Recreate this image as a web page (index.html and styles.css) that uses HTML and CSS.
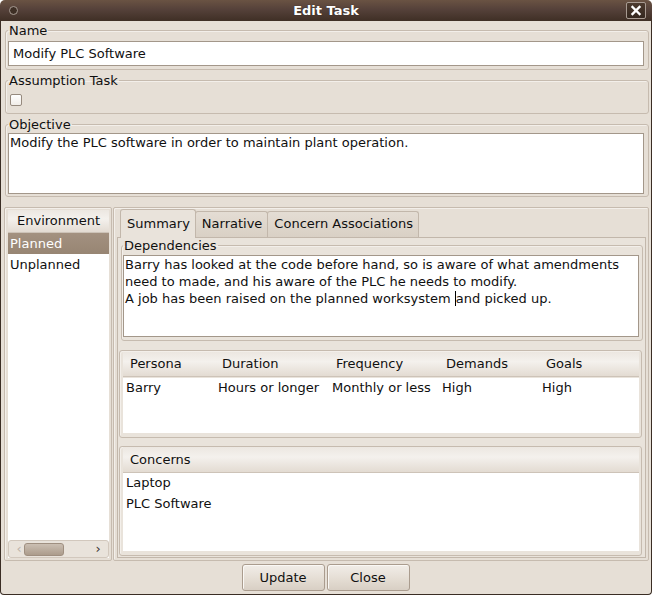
FILE: index.html
```html
<!DOCTYPE html>
<html>
<head>
<meta charset="utf-8">
<title>Edit Task</title>
<link rel="stylesheet" href="styles.css">
</head>
<body>
<div class="window">
  <div class="titlebar">
    <span class="knob"></span>
    <span class="title">Edit Task</span>
    <span class="closebtn">
      <svg width="12" height="11" viewBox="0 0 12 11"><path d="M2.5 2 L9.5 9 M9.5 2 L2.5 9" stroke="#fff" stroke-width="2.4" stroke-linecap="square"/></svg>
    </span>
  </div>
  <div class="client">
    <fieldset class="frame f-name">
      <legend>Name</legend>
      <div class="entry">Modify PLC Software</div>
    </fieldset>
    <fieldset class="frame f-assume">
      <legend>Assumption Task</legend>
      <span class="check"></span>
    </fieldset>
    <fieldset class="frame f-obj">
      <legend>Objective</legend>
      <div class="textarea obj-text">Modify the PLC software in order to maintain plant operation.</div>
    </fieldset>

    <div class="lower">
      <div class="envpanel">
        <div class="tree">
          <div class="colhead center">Environment</div>
          <div class="row selected">Planned</div>
          <div class="row">Unplanned</div>
          <div class="fill"></div>
          <div class="hscroll">
            <span class="arr dim">&#8249;</span>
            <span class="thumb"></span>
            <span class="arr">&#8250;</span>
          </div>
        </div>
      </div>

      <div class="nbpanel">
        <div class="tabs">
          <div class="tab active">Summary</div>
          <div class="tab">Narrative</div>
          <div class="tab">Concern Associations</div>
        </div>
        <div class="page">
          <fieldset class="frame f-deps">
            <legend>Dependencies</legend>
            <div class="textarea deps-text">Barry has looked at the code before hand, so is aware of what amendments<br>need to made, and his aware of the PLC he needs to modify.<br>A job has been raised on the planned worksystem <span class="caret"></span>and picked up.</div>
          </fieldset>
          <div class="listbox persona">
            <div class="grid head">
              <span>Persona</span><span>Duration</span><span>Frequency</span><span>Demands</span><span>Goals</span>
            </div>
            <div class="listbody">
              <div class="grid rowg">
                <span>Barry</span><span>Hours or longer</span><span>Monthly or less</span><span>High</span><span>High</span>
              </div>
            </div>
          </div>
          <div class="listbox concerns">
            <div class="colhead">Concerns</div>
            <div class="listbody">
              <div class="row c-row">Laptop</div>
              <div class="row c-row">PLC Software</div>
            </div>
          </div>
        </div>
      </div>
    </div>

    <div class="buttons">
      <div class="btn">Update</div>
      <div class="btn">Close</div>
    </div>
  </div>
</div>
</body>
</html>
```
FILE: styles.css
```css
* { box-sizing: border-box; }
html, body { margin: 0; padding: 0; }
body {
  width: 652px;
  height: 595px;
  overflow: hidden;
  background: #ffffff;
  font-family: "DejaVu Sans", "Noto Sans", sans-serif;
  font-size: 13px;
  color: #101010;
}
.window {
  width: 652px;
  height: 595px;
  display: flex;
  flex-direction: column;
}
.titlebar {
  height: 21px;
  flex: none;
  display: grid;
  grid-template-columns: 1fr auto 1fr;
  align-items: center;
  background: linear-gradient(#6a5343, #55413a 45%, #3f2f25);
  border-radius: 5px 5px 0 0;
  color: #ffffff;
  font-weight: bold;
  font-size: 13px;
}
.title { line-height: 21px; text-shadow: 0 0 1px #2a1f18; }
.knob {
  width: 9px;
  height: 9px;
  margin-left: 9px;
  border-radius: 50%;
  background: #3e2f25;
  border: 1px solid #a79b92;
}
.closebtn {
  justify-self: end;
  margin-right: 6px;
  width: 20px;
  height: 17px;
  border: 1px solid #a89b92;
  border-radius: 2px;
  background: linear-gradient(#4c3a2e, #352820);
  display: flex;
  align-items: center;
  justify-content: center;
}
.client {
  flex: 1;
  display: flex;
  flex-direction: column;
  background: #e6dfd6;
  border: 1px solid #3a2d24;
  border-top: 0;
  border-radius: 0 0 4px 4px;
  padding: 2px 2px 0 4px;
}
.frame {
  margin: 0;
  min-width: 0;
  border: 1px solid #c6bbaf;
  border-radius: 3px;
  box-shadow: inset 1px 1px 0 #f3efea;
  padding: 0 4px 3px 2px;
}
.frame legend {
  padding: 0 1px;
  line-height: 15px;
  font-size: 13px;
}
.entry {
  margin-top: 3px;
  height: 25px;
  background: #ffffff;
  border: 1px solid #a3978a;
  padding: 0 4px;
  line-height: 23px;
  white-space: nowrap;
}
.f-assume { margin-top: 3px; padding-bottom: 3px; }
.check {
  display: block;
  width: 12px;
  height: 12px;
  margin: 6px 0 4px 2px;
  background: linear-gradient(#ffffff, #f1ede8);
  border: 1px solid #968a7e;
  border-radius: 2px;
}
.f-obj { margin-top: 3px; padding-bottom: 2px; }
.textarea {
  background: #ffffff;
  border: 1px solid #a3978a;
  line-height: 17px;
  padding: 0 1px;
  white-space: nowrap;
}
.obj-text { margin-top: 1px; height: 61px; }

.lower {
  display: flex;
  height: 354px;
  margin-top: 10px;
  margin-left: -1px;
  gap: 1px;
}
.envpanel {
  width: 108px;
  flex: none;
  border: 1px solid #c6bbaf;
  border-radius: 2px;
  box-shadow: inset 1px 1px 0 #f3efea;
  padding: 2px 2px 2px 3px;
  display: flex;
}
.tree {
  flex: 1;
  display: flex;
  flex-direction: column;
  background: #ffffff;
}
.colhead {
  height: 24px;
  flex: none;
  line-height: 23px;
  padding-left: 7px;
  background: linear-gradient(#ece7e1, #f4f1ed 40%, #e3dbd2);
  border-bottom: 1px solid #cdc3b8;
  white-space: nowrap;
}
.colhead.center { text-align: center; padding-left: 0; height: 23px; line-height: 22px; }
.row {
  height: 21px;
  line-height: 21px;
  padding-left: 2px;
  white-space: nowrap;
}
.row.selected {
  background: linear-gradient(#a39180, #978573);
  color: #ffffff;
}
.fill { flex: 1; }
.hscroll {
  height: 18px;
  flex: none;
  background: #e9e3db;
  border: 1px solid #d2c8bd;
  border-radius: 3px;
  display: flex;
  align-items: center;
  padding: 0 5px 0 5px;
  color: #3a3330;
  font-size: 13px;
}
.arr { width: 10px; text-align: center; line-height: 14px; }
.arr.dim { color: #bdb4aa; }
.thumb {
  width: 40px;
  height: 13px;
  margin-right: auto;
  border-radius: 3px;
  border: 1px solid #9f8f80;
  background: linear-gradient(#cbbfb2, #ac9c8c);
}

.nbpanel {
  flex: 1;
  border: 1px solid #c6bbaf;
  border-radius: 2px;
  box-shadow: inset 1px 1px 0 #f3efea;
  padding: 0 2px 2px 3px;
  display: flex;
  flex-direction: column;
}
.tabs {
  display: flex;
  align-items: flex-end;
  height: 29px;
  flex: none;
  padding-left: 3px;
}
.tab {
  height: 26px;
  line-height: 24px;
  padding: 0 5px 0 6px;
  border: 1px solid #c2b7ab;
  border-bottom: 0;
  border-radius: 3px 3px 0 0;
  background: linear-gradient(#e4ddd4, #d9d0c5);
  white-space: nowrap;
  margin-right: -1px;
}
.tab.active {
  height: 29px;
  line-height: 27px;
  margin-bottom: -1px;
  background: #e9e3db;
  position: relative;
  z-index: 1;
}
.page {
  flex: 1;
  border: 1px solid #c2b7ab;
  background: #e9e3db;
  display: flex;
  flex-direction: column;
  padding-bottom: 0;
}
.f-deps {
  margin: 0 2px 0 3px;
  padding: 0 3px 3px 1px;
}
.deps-text { margin-top: 2px; height: 82px; padding-left: 1px; }
.caret {
  display: inline-block;
  width: 0;
  height: 15px;
  border-left: 1px solid #000;
  vertical-align: -3px;
}
.listbox {
  border: 1px solid #c6bbaf;
  border-radius: 3px;
  box-shadow: inset 1px 1px 0 #f3efea;
  padding: 1px 2px 4px 3px;
  display: flex;
  flex-direction: column;
}
.persona { margin: 9px 3px 0 1px; height: 88px; }
.concerns { margin: 8px 3px 1px 1px; flex: 1; padding-top: 0; }
.concerns .colhead { height: 26px; line-height: 25px; }
.listbody { flex: 1; background: #ffffff; }
.grid {
  display: grid;
  grid-template-columns: 92px 114px 110px 100px 1fr;
  white-space: nowrap;
}
.grid.head {
  height: 25px;
  line-height: 24px;
  background: linear-gradient(#ece7e1, #f4f1ed 40%, #e3dbd2);
  border-bottom: 1px solid #cdc3b8;
  margin-bottom: 1px;
}
.grid.head span { padding-left: 7px; }
.grid.rowg { height: 20px; line-height: 20px; }
.grid.rowg span { padding-left: 3px; }
.c-row { padding-left: 3px; height: 20px; line-height: 20px; margin-bottom: 1px; }

.buttons {
  display: flex;
  justify-content: center;
  gap: 2px;
  margin-top: 3px;
  padding-right: 3px;
}
.btn {
  width: 83px;
  height: 27px;
  line-height: 25px;
  text-align: center;
  border: 1px solid #aa9c8e;
  border-radius: 3px;
  background: linear-gradient(#f1ede8, #e6dfd6 50%, #d8cfc4);
  box-shadow: inset 1px 1px 0 #faf8f5;
}
```
